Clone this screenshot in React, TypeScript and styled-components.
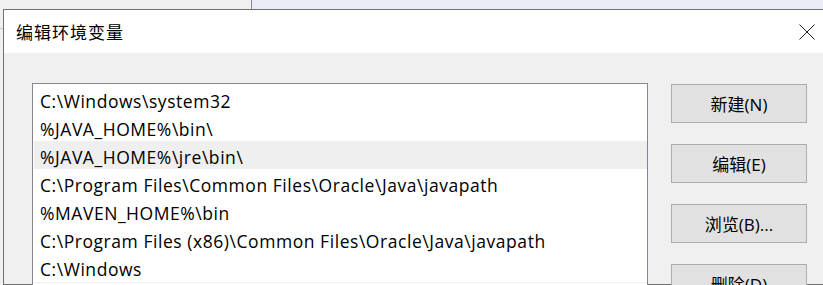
import React from 'react';
import styled, { createGlobalStyle } from 'styled-components';

const paths = [
  'C:\\Windows\\system32',
  '%JAVA_HOME%\\bin\\',
  '%JAVA_HOME%\\jre\\bin\\',
  'C:\\Program Files\\Common Files\\Oracle\\Java\\javapath',
  '%MAVEN_HOME%\\bin',
  'C:\\Program Files (x86)\\Common Files\\Oracle\\Java\\javapath',
  'C:\\Windows',
];

const actions = ['新建(N)', '编辑(E)', '浏览(B)...', '删除(D)'];

const GlobalStyle = createGlobalStyle`
  html, body {
    margin: 0;
    padding: 0;
    overflow: hidden;
  }
  body {
    font-family: "Open Sans", "Noto Sans CJK SC", sans-serif;
    color: #000;
  }
`;

const Page = styled.div`
  width: 823px;
  height: 285px;
  display: flex;
  flex-direction: column;
  overflow: hidden;
  background-color: #f0f0f0;
`;

const BehindStrip = styled.div`
  height: 9px;
  flex-shrink: 0;
  display: flex;
`;

const BehindPane = styled.div<{ $tint?: boolean }>`
  width: ${(p) => (p.$tint ? 'auto' : '251px')};
  flex: ${(p) => (p.$tint ? 1 : 'none')};
  background-color: ${(p) => (p.$tint ? '#eaecf6' : '#f0f0f0')};
  border-right: ${(p) => (p.$tint ? 'none' : '1px solid #8c8c8c')};
`;

const Main = styled.div`
  flex: 1;
  display: flex;
  min-height: 0;
`;

const Gutter = styled.div`
  width: 3px;
  flex-shrink: 0;
  display: flex;
  flex-direction: column;

  span {
    height: 19px;
    border-bottom: 1px solid #c8c8c8;
  }
`;

const Dialog = styled.div`
  width: 822px;
  flex-shrink: 0;
  display: flex;
  flex-direction: column;
  border: 1px solid #707070;
  background-color: #f0f0f0;
`;

const TitleBar = styled.div`
  height: 43px;
  flex-shrink: 0;
  display: flex;
  align-items: center;
  justify-content: space-between;
  padding: 0 11px 0 12px;
  background-color: #fff;
`;

const Title = styled.span`
  font-family: "Noto Sans CJK SC", sans-serif;
  font-size: 17px;
  letter-spacing: 1px;
  margin-top: -1px;
`;

const CloseIcon = styled.svg`
  width: 16px;
  height: 16px;
  display: block;
  stroke: #1a1a1a;
  stroke-width: 1;
`;

const Body = styled.div`
  flex: 1;
  display: flex;
  align-items: flex-start;
  gap: 23px;
  padding: 30px 0 0 28px;
`;

const PathList = styled.ul`
  list-style: none;
  margin: 0;
  width: 616px;
  height: 260px;
  padding: 1px 0 0 1px;
  box-sizing: border-box;
  flex-shrink: 0;
  border: 1px solid #828790;
  background-color: #fff;
  overflow: hidden;
`;

const PathRow = styled.li<{ $selected?: boolean }>`
  height: 27px;
  display: flex;
  align-items: center;
  padding: 2px 0 0 6px;
  box-sizing: content-box;
  border-bottom: 1px solid #efefef;
  background-color: ${(p) => (p.$selected ? '#efefef' : '#fff')};
  font-size: 17.5px;
  letter-spacing: 0.55px;
  white-space: nowrap;
  margin-top: -2px;

  &:first-child {
    margin-top: 0;
  }
`;

const Actions = styled.div`
  display: flex;
  flex-direction: column;
  gap: 21px;
  margin-top: 1px;
`;

const ActionButton = styled.button`
  width: 136px;
  height: 39px;
  flex-shrink: 0;
  padding: 0;
  border: 1px solid #adadad;
  background-color: #e1e1e1;
  color: #000;
  font-family: "Open Sans", "Noto Sans CJK SC", sans-serif;
  font-size: 17px;
`;

export default function App() {
  return (
    <>
      <GlobalStyle />
      <Page>
        <BehindStrip>
          <BehindPane />
          <BehindPane $tint />
        </BehindStrip>
        <Main>
          <Gutter>
            <span />
          </Gutter>
          <Dialog>
            <TitleBar>
              <Title>编辑环境变量</Title>
              <CloseIcon viewBox="0 0 16 16">
                <path d="M0.5 0.5 L15.5 15.5 M15.5 0.5 L0.5 15.5" />
              </CloseIcon>
            </TitleBar>
            <Body>
              <PathList>
                {paths.map((p, i) => (
                  <PathRow key={p} $selected={i === 2}>
                    {p}
                  </PathRow>
                ))}
              </PathList>
              <Actions>
                {actions.map((a) => (
                  <ActionButton key={a} type="button">
                    {a}
                  </ActionButton>
                ))}
              </Actions>
            </Body>
          </Dialog>
        </Main>
      </Page>
    </>
  );
}
